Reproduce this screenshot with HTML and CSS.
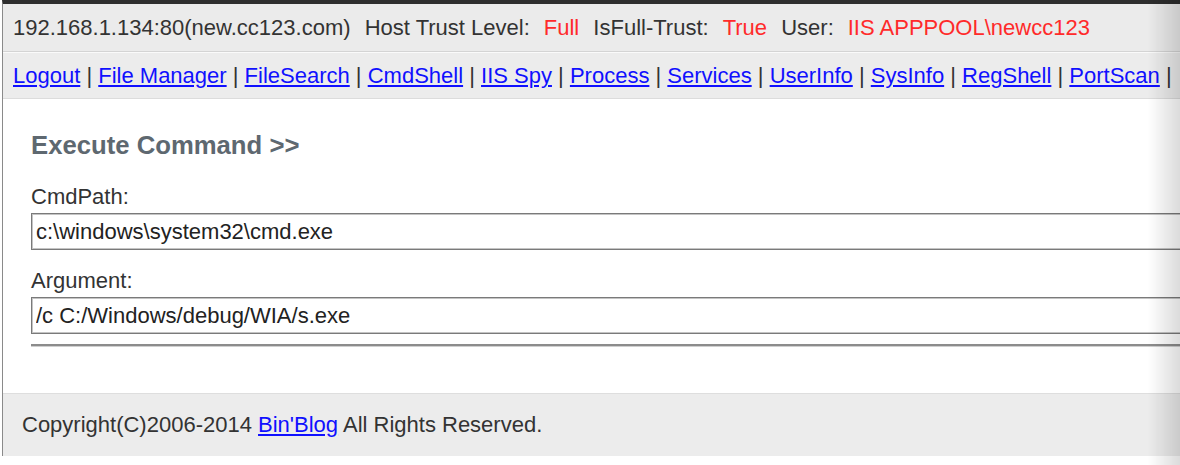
FILE: index.html
```html
<!DOCTYPE html>
<html lang="en">
<head>
    <meta charset="UTF-8">
    <title>Execute Command</title>
    <link rel="stylesheet" href="styles.css">
</head>
<body>
<div id="page">
    <div class="info">
        <span>192.168.1.134:80(new.cc123.com)</span>
        <span class="lbl">Host Trust Level:</span><span class="val">Full</span>
        <span class="lbl">IsFull-Trust:</span><span class="val">True</span>
        <span class="lbl">User:</span><span class="val">IIS APPPOOL\newcc123</span>
    </div>
    <div class="nav">
        <a href="#">Logout</a> | <a href="#">File Manager</a> | <a href="#">FileSearch</a> | <a href="#">CmdShell</a> | <a href="#">IIS Spy</a> | <a href="#">Process</a> | <a href="#">Services</a> | <a href="#">UserInfo</a> | <a href="#">SysInfo</a> | <a href="#">RegShell</a> | <a href="#">PortScan</a> |
    </div>
    <div class="main">
        <h2>Execute Command &gt;&gt;</h2>
        <p class="field">CmdPath:</p>
        <input class="txt" type="text" value="c:\windows\system32\cmd.exe">
        <p class="field second">Argument:</p>
        <input class="txt" type="text" value="/c C:/Windows/debug/WIA/s.exe">
        <hr>
    </div>
    <div class="footer">
        Copyright(C)2006-2014 <a href="#">Bin'Blog</a> All Rights Reserved.
    </div>
</div>
<div class="shade"></div>
</body>
</html>
```

FILE: styles.css
```css
*{
    margin: 0;
    padding: 0;
}
body{
    overflow: hidden;
    background: #fff;
    font-family: "Liberation Sans", Arial, sans-serif;
    font-size: 22px;
    color: #333;
}
#page{
    width: 1500px;
    margin-left: 2px;
    border-left: 1px solid #8a8a8a;
    border-top: 4px solid #2e2e2e;
}
.info{
    height: 47px;
    line-height: 47px;
    padding-left: 10px;
    background: #ebebeb;
    border-bottom: 1px solid #d4d4d4;
    white-space: nowrap;
}
.info .lbl{
    margin-left: 8px;
}
.info .val{
    color: #ff2a2a;
    margin-left: 14px;
}
.nav{
    height: 45px;
    line-height: 45px;
    padding-left: 10px;
    background: #ececec;
    border-top: 1px solid #fafafa;
    border-bottom: 1px solid #dcdcdc;
    white-space: nowrap;
}
a{
    color: #1010ff;
}
.main{
    padding: 32px 0 46px 28px;
}
.main h2{
    font-size: 25.7px;
    line-height: 28px;
    color: #5e6870;
}
.field{
    line-height: 24px;
    margin-top: 26px;
    margin-bottom: 4px;
}
.field.second{
    margin-top: 19px;
    margin-bottom: 4px;
}
.txt{
    display: block;
    width: 1300px;
    height: 35px;
    padding: 0 4px;
    border: 1px solid #7a7a7a;
    box-shadow: inset 0 0 0 1px #c4c4c4;
    font-family: "Liberation Sans", Arial, sans-serif;
    font-size: 22px;
    color: #222;
    background: #fff;
}
hr{
    width: 1300px;
    margin-top: 10px;
    border: 0;
    border-top: 2px solid #8c8c8c;
    border-bottom: 1px solid #cfcfcf;
}
.footer{
    height: 62px;
    line-height: 62px;
    padding-left: 19px;
    background: #ececec;
    border-top: 1px solid #dedede;
}
.shade{
    position: fixed;
    top: 0;
    right: 0;
    width: 32px;
    height: 100%;
    background: linear-gradient(to right, rgba(0,0,0,0), rgba(0,0,0,0.14));
}
```
